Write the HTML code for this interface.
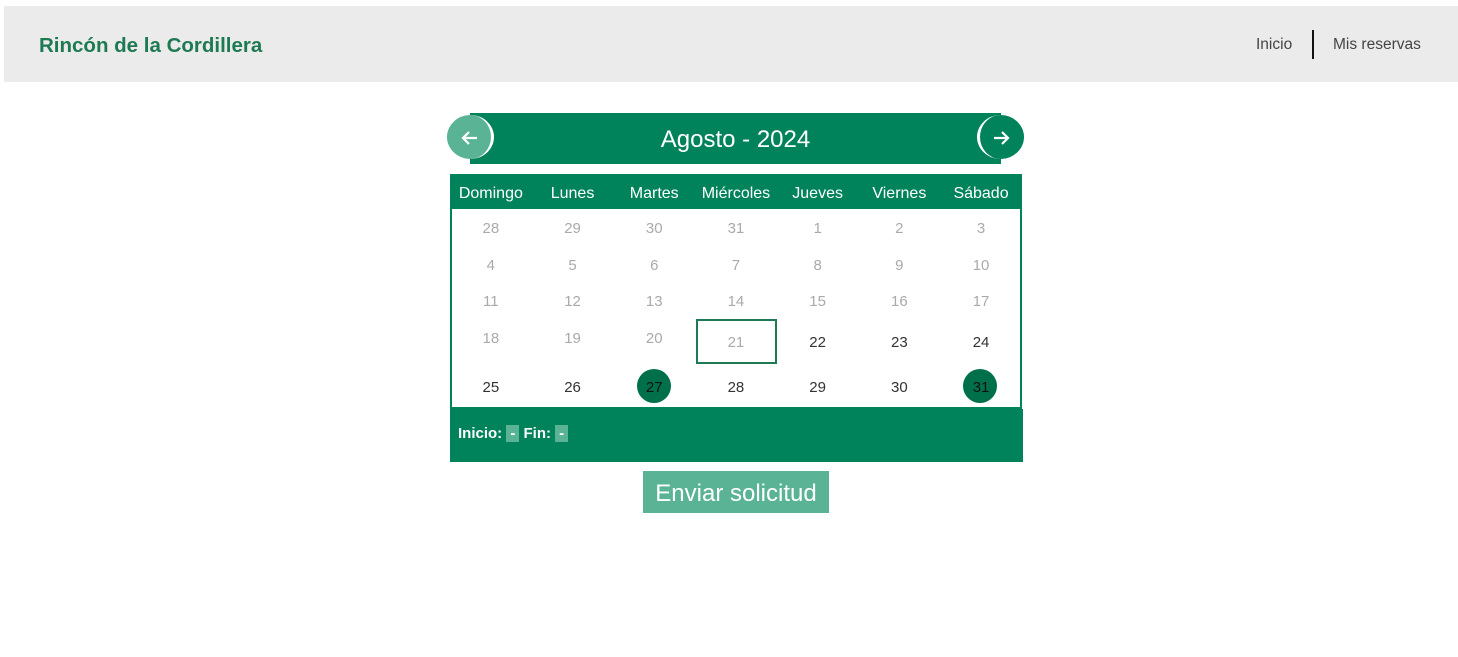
<!DOCTYPE html><html><head><meta charset="utf-8"><style>
body{margin:0;width:1458px;height:657px;background:#fff;font-family:"Liberation Sans",sans-serif;position:relative;overflow:hidden}
.a{position:absolute}
.hd{left:4px;top:6px;width:1454px;height:76px;background:#ebebeb}
.c{position:absolute;width:81.7px;text-align:center;font-size:15px}
</style></head><body>
<div class="a hd"></div>
<div class="a" style="left:39px;top:34px;font-size:20.5px;font-weight:bold;color:#1e7a53">Rincón de la Cordillera</div>
<div class="a" style="left:1256px;top:36px;font-size:15.5px;color:#444">Inicio</div>
<div class="a" style="left:1312px;top:30px;width:2px;height:29px;background:#111"></div>
<div class="a" style="left:1333px;top:36px;font-size:15.5px;color:#444">Mis reservas</div>

<div class="a" style="left:470px;top:113px;width:531px;height:51px;background:#00825a"></div>
<div class="a" style="left:447px;top:115px;width:44px;height:44px;border-radius:50%;background:#5ab394;border-right:3px solid #fff"></div>
<svg class="a" style="left:459px;top:127px" width="22" height="22" viewBox="0 0 22 22"><path d="M18 11H4M10 5l-6 6 6 6" stroke="#fff" stroke-width="2.2" fill="none"/></svg>
<div class="a" style="left:977px;top:115px;width:44px;height:44px;border-radius:50%;background:#00825a;border-left:3px solid #fff"></div>
<svg class="a" style="left:990px;top:127px" width="22" height="22" viewBox="0 0 22 22"><path d="M4 11h14M12 5l6 6-6 6" stroke="#fff" stroke-width="2.2" fill="none"/></svg>
<div class="a" style="left:470px;top:126px;width:531px;text-align:center;font-size:24px;color:#fff">Agosto - 2024</div>

<div class="a" style="left:450px;top:174px;width:572px;height:35px;background:#00825a"></div>
<div class="a" style="left:450px;top:209px;width:568px;height:198px;border:2px solid #00825a;border-top:0;background:#fff"></div>
<div class="a" style="left:450px;top:409px;width:573px;height:53px;background:#00825a"></div>
<div class="a" style="left:696px;top:319px;width:77px;height:41px;border:2px solid #1e7a53"></div>
<div class="a" style="left:637px;top:369px;width:34px;height:34px;border-radius:50%;background:#00704a"></div>
<div class="a" style="left:963px;top:369px;width:34px;height:34px;border-radius:50%;background:#00704a"></div>
<div id="g"></div>
<div class="a" style="left:458px;top:425px;font-size:15px;font-weight:bold;color:#fff">Inicio: <span style="background:#5ab394;padding:0 4px">-</span> Fin: <span style="background:#5ab394;padding:0 4px">-</span></div>
<div class="a" style="left:643px;top:471px;width:186px;height:42px;background:#5ab394;color:#fff;font-size:24px;text-align:center;line-height:46px">Enviar solicitud</div>
<script>
var h=["Domingo","Lunes","Martes","Miércoles","Jueves","Viernes","Sábado"],s="";
for(var i=0;i<7;i++)s+='<div class="c" style="left:'+(450+i*81.7)+'px;top:185px;color:#fff;font-size:16px">'+h[i]+'</div>';
var d=[28,29,30,31,1,2,3,4,5,6,7,8,9,10,11,12,13,14,15,16,17,18,19,20,21,22,23,24,25,26,27,28,29,30,31];
var ys=[220,257,293,330,379];
for(var k=0;k<35;k++){var r=Math.floor(k/7),c=k%7,y=ys[r],col='#aaa';
if(r==3&&c>=3){y=334;if(c>3)col='#333'}if(r==4)col='#333';if(k==30||k==34)col='#111';
s+='<div class="c" style="left:'+(450+c*81.7)+'px;top:'+y+'px;color:'+col+'">'+d[k]+'</div>';}
document.getElementById('g').innerHTML=s;
</script>
</body></html>
